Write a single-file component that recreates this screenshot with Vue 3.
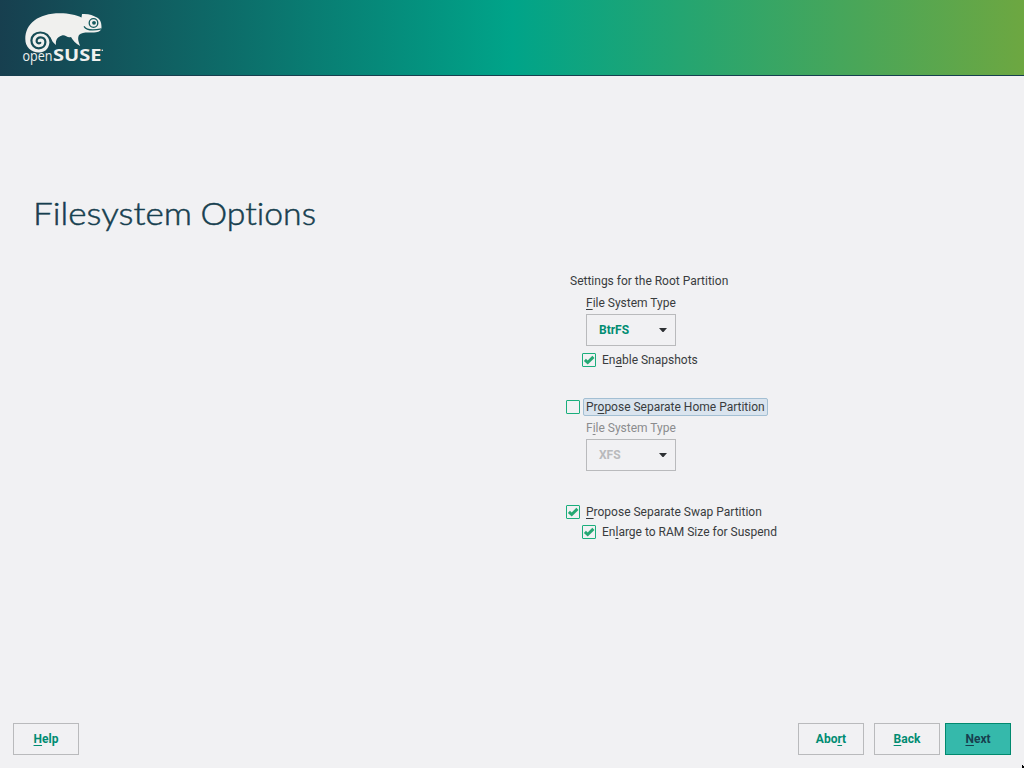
<script setup>
const buttons = [
  { pre: 'Abo', key: 'r', post: 't', cls: 'abort' },
  { pre: '', key: 'B', post: 'ack', cls: 'back' },
  { pre: '', key: 'N', post: 'ext', cls: 'next' }
]
</script>

<template>
  <div class="installer">
    <header class="banner">
      <svg class="logo" viewBox="0 0 110 75" width="110" height="75" role="img" aria-label="openSUSE">
        <path class="body" d="M39 52.500C31 52.500 25.300 47 25.300 39C25.300 24 38 13.300 60 13.300C69 13.300 76 15.200 81.500 17.500L82 14C89 13.500 93 15.500 97 17.500C100.500 19.500 101.500 23 101.500 27C101.500 30.500 99.500 31.700 96 32.200C90 33 82.500 31 79 35C77.300 38 78.500 42 80.200 46C75.500 43.500 72.500 40 71 37C67.500 38.500 65.500 34.500 62 35.500C58 36.500 55.300 39.500 56 45C53 43 51.500 40 50.500 37L49.500 40C49.800 47.500 46 52.500 39 52.500Z" />
        <path class="spiral" d="M51 42C49.500 36 46 32.500 40.300 32.500C35 32.500 31.400 36 31.400 40.600C31.400 45 34.500 48.300 38.800 48.300C42.800 48.300 45.400 45.500 45.400 42C45.400 39.300 43.300 37.300 40.700 37.300C38.300 37.300 36.600 39 36.600 41C36.600 42.900 38.500 43.900 40.300 42.900" />
        <circle class="eye" cx="93.500" cy="23" r="4.300" />
        <circle class="pupil" cx="94" cy="22.800" r="1.900" />
        <path class="mouth" d="M84 26.300C86.500 30.300 93 30.700 101.500 28.800" />
        <text y="61.300"><tspan class="open" x="22.500" textLength="30" lengthAdjust="spacingAndGlyphs">open</tspan><tspan class="suse" x="53" textLength="48.500" lengthAdjust="spacingAndGlyphs">SUSE</tspan></text>
        <circle class="mark" cx="102.300" cy="50.200" r="0.800" />
      </svg>
    </header>

    <h1 class="title">
      <svg width="300" height="50" viewBox="0 0 300 50">
        <text x="-1" y="34.800" textLength="159" lengthAdjust="spacingAndGlyphs">Filesystem</text>
        <text x="166.500" y="34.800" textLength="115.500" lengthAdjust="spacingAndGlyphs">Options</text>
      </svg>
    </h1>

    <main class="options">
      <p class="line section">Settings for the Root Partition</p>
      <p class="line caption"><u>F</u>ile System Type</p>
      <div class="combo">BtrFS<svg width="8" height="4" viewBox="0 0 8 4"><path d="M0 0H8L4.500 4H3.500Z" /></svg></div>
      <label class="check inner snapshots">
        <span class="box"><svg width="14" height="14" viewBox="0 0 14 14"><path d="M2.900 6.900L5.700 9.500L11.400 3.900" /></svg></span>
        <span class="text">En<u>a</u>ble Snapshots</span>
      </label>
      <label class="check home">
        <span class="box"></span>
        <span class="text focused">Pr<u>o</u>pose Separate Home Partition</span>
      </label>
      <p class="line caption muted">F<u>i</u>le System Type</p>
      <div class="combo disabled">XFS<svg width="8" height="4" viewBox="0 0 8 4"><path d="M0 0H8L4.500 4H3.500Z" /></svg></div>
      <label class="check swap">
        <span class="box"><svg width="14" height="14" viewBox="0 0 14 14"><path d="M2.900 6.900L5.700 9.500L11.400 3.900" /></svg></span>
        <span class="text"><u>P</u>ropose Separate Swap Partition</span>
      </label>
      <label class="check inner enlarge">
        <span class="box"><svg width="14" height="14" viewBox="0 0 14 14"><path d="M2.900 6.900L5.700 9.500L11.400 3.900" /></svg></span>
        <span class="text">En<u>l</u>arge to RAM Size for Suspend</span>
      </label>
    </main>

    <footer class="actions">
      <button class="btn help"><span><u>H</u>elp</span></button>
      <button v-for="b in buttons" :key="b.cls" class="btn" :class="b.cls"><span>{{ b.pre }}<u>{{ b.key }}</u>{{ b.post }}</span></button>
    </footer>
    <svg class="pointer" width="2" height="3" viewBox="0 0 2 3"><path d="M0 0H1V1H2V3H0Z" /></svg>
  </div>
</template>

<style>
body {
  background: #f1f1f3;
  overflow: hidden;
}
</style>

<style scoped>
.installer {
  position: relative;
  box-sizing: border-box;
  width: 1024px;
  height: 768px;
  display: flex;
  flex-direction: column;
  background: #f1f1f3;
  color: #393c3e;
  font: 12px/14px Roboto, sans-serif;
}
.banner {
  box-sizing: border-box;
  flex: none;
  height: 76px;
  border-bottom: 1px solid #173f4f;
  background: linear-gradient(90deg, #173f4f 0%, #00a489 50%, #6da741 100%);
}
.logo { display: block; }
.body, .mark { fill: #f0f0ee; }
.spiral { fill: none; stroke: #174c56; stroke-width: 2.200; stroke-linecap: round; }
.eye { fill: none; stroke: #135a5e; stroke-width: 1.3; }
.pupil { fill: #135a5e; }
.mouth { fill: none; stroke: #135a5e; stroke-width: 1.3; }
.open, .suse { fill: #f0f0ee; }
.open { font: 400 15px "Open Sans", sans-serif; }
.suse { font: 700 16.500px "Open Sans", sans-serif; }
.title {
  margin: 114px 0 0 34px;
  height: 50px;
  font: 300 32px Lato, sans-serif;
}
.title svg { display: block; overflow: visible; }
.title text {
  fill: #173f4f;
  stroke: #173f4f;
  stroke-width: 0.5px;
  font-variant-ligatures: none;
}
.options {
  display: flex;
  flex-direction: column;
  align-items: flex-start;
  margin: 34px 0 0 566px;
}
.line { margin: 0; }
.section { margin-left: 4px; }
.caption { margin: 8px 0 4px 20px; }
.caption.muted { margin-top: 5px; color: #8b8c8e; }
u {
  text-decoration: underline;
  text-decoration-thickness: 1px;
  text-underline-offset: 2px;
  text-decoration-skip-ink: none;
}
.combo {
  box-sizing: border-box;
  width: 90px;
  height: 32px;
  margin-left: 20px;
  padding: 0 8px 0 12px;
  display: flex;
  align-items: center;
  justify-content: space-between;
  border: 1px solid #b9babc;
  color: #008c72;
  font-weight: 700;
}
.combo path { fill: #2d3033; }
.combo.disabled { color: #b9babc; }
.check {
  display: flex;
  align-items: center;
  height: 14px;
}
.box {
  box-sizing: border-box;
  width: 14px;
  height: 14px;
  margin-right: 3px;
  border: 1px solid #1aae7c;
  border-radius: 1px;
}
.box svg { display: block; margin: -1px; }
.box path { fill: none; stroke: #25a873; stroke-width: 3; }
.text { padding: 1px 2px; border: 1px solid transparent; }
.focused {
  border-color: #a3bfd3;
  border-radius: 2px;
  background: #dae4ee;
}
.inner { margin-left: 16px; }
.snapshots { margin-top: 7px; }
.home { margin-top: 33px; margin-bottom: 2px; }
.swap { margin-top: 34px; }
.enlarge { margin-top: 6px; }
.actions {
  display: flex;
  margin: auto 13px 13px;
}
.btn {
  box-sizing: border-box;
  width: 66px;
  height: 32px;
  padding: 0;
  border: 1px solid #b9babc;
  background: transparent;
  color: #008c72;
  font: 700 12px/14px Roboto, sans-serif;
}
.help { margin-right: auto; }
.back { margin-left: 10px; }
.next {
  margin-left: 5px;
  border-color: #00896e;
  background: #35b9ab;
  color: #173f4f;
}
.pointer { position: absolute; right: 0; bottom: 0; fill: #000; }
</style>
